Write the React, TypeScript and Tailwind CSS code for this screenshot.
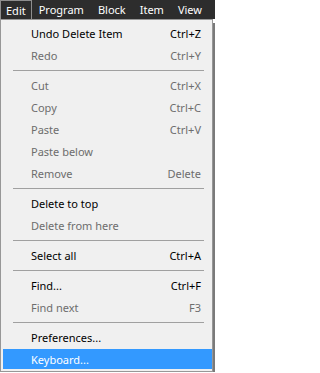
import React from "react";

type Row =
  | { kind: "item"; label: string; shortcut?: string; disabled?: boolean; active?: boolean }
  | { kind: "sep" };

const rows: Row[] = [
  { kind: "item", label: "Undo Delete Item", shortcut: "Ctrl+Z" },
  { kind: "item", label: "Redo", shortcut: "Ctrl+Y", disabled: true },
  { kind: "sep" },
  { kind: "item", label: "Cut", shortcut: "Ctrl+X", disabled: true },
  { kind: "item", label: "Copy", shortcut: "Ctrl+C", disabled: true },
  { kind: "item", label: "Paste", shortcut: "Ctrl+V", disabled: true },
  { kind: "item", label: "Paste below", disabled: true },
  { kind: "item", label: "Remove", shortcut: "Delete", disabled: true },
  { kind: "sep" },
  { kind: "item", label: "Delete to top" },
  { kind: "item", label: "Delete from here", disabled: true },
  { kind: "sep" },
  { kind: "item", label: "Select all", shortcut: "Ctrl+A" },
  { kind: "sep" },
  { kind: "item", label: "Find...", shortcut: "Ctrl+F" },
  { kind: "item", label: "Find next", shortcut: "F3", disabled: true },
  { kind: "sep" },
  { kind: "item", label: "Preferences..." },
  { kind: "item", label: "Keyboard...", active: true },
];

export default function App() {
  return (
    <div
      className="w-[215px] h-[373px] bg-white overflow-hidden relative text-[11px] leading-none"
      style={{ fontFamily: '"Noto Sans", "DejaVu Sans", sans-serif' }}
    >
      {/* menu bar */}
      <div className="h-[19px] bg-[#2d2d2d] flex items-stretch text-white text-[11px]">
        <div className="border border-[#8e8e8e] border-b-0 px-[5px] flex items-center h-[19px]">Edit</div>
        <div className="px-[7px] flex items-center">Program</div>
        <div className="px-[7px] flex items-center">Block</div>
        <div className="px-[7px] flex items-center">Item</div>
        <div className="px-[7px] flex items-center">View</div>
      </div>
      {/* dropdown */}
      <div className="flex">
        <div className="w-[213px] h-[353px] bg-[#f0f0f0] border border-[#979797] pl-[2px] pt-[2px] flex flex-col">
          {rows.map((r, i) =>
            r.kind === "sep" ? (
              <div key={i} className="h-[8px] flex items-center pl-[10px] pr-[8px]">
                <div className="h-px w-full bg-[#a0a0a0]" />
              </div>
            ) : (
              <div key={i} className="h-[22px] py-px">
                <div
                  className={
                    "h-[20px] flex items-center pl-[28px] pr-[11px] " +
                    (r.active
                      ? "bg-[#3399ff] text-white"
                      : r.disabled
                      ? "text-[#6d6d6d]"
                      : "text-black")
                  }
                >
                  <span className="flex-1">{r.label}</span>
                  {r.shortcut && <span>{r.shortcut}</span>}
                </div>
              </div>
            )
          )}
        </div>
        <div className="w-[2px] mt-[4px] h-[349px] bg-[#7a7a7a]" />
      </div>
    </div>
  );
}
